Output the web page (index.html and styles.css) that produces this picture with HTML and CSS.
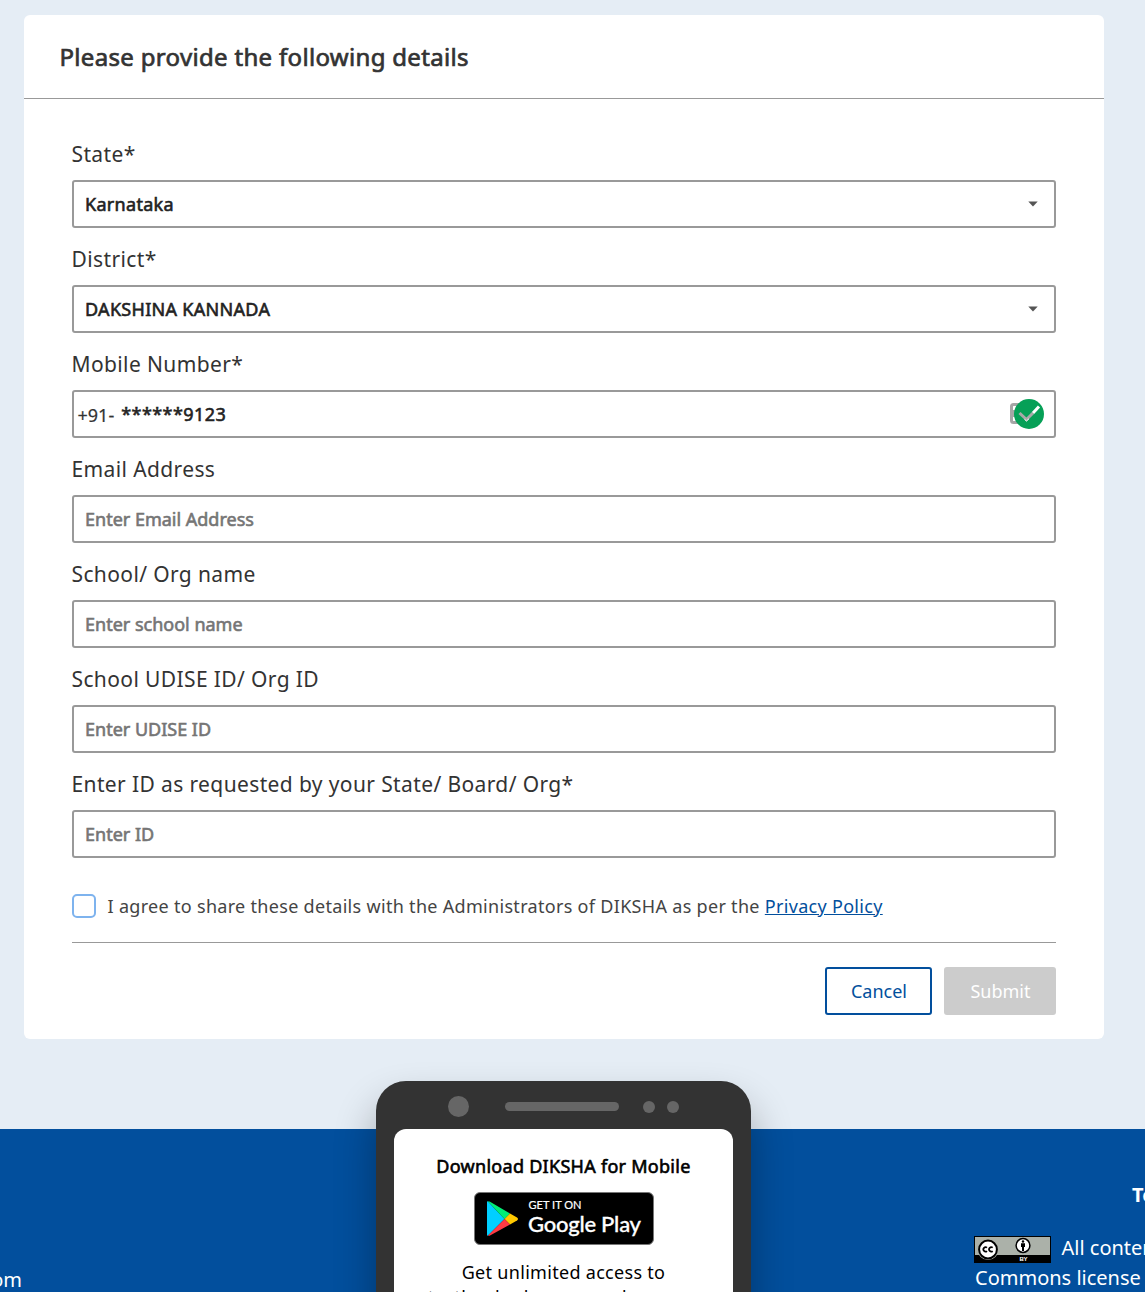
FILE: index.html
```html
<!DOCTYPE html>
<html lang="en">
<head>
<meta charset="utf-8">
<title>DIKSHA - Submit details</title>
<link rel="stylesheet" href="styles.css">
</head>
<body>
<main class="card">
  <header class="card-header"><h1 class="title"><span>Please provide the following details</span></h1></header>
  <form class="form">
    <div class="field"><label class="label">State*</label><div class="control select"><span class="value">Karnataka</span><svg class="caret" viewBox="0 0 10 6"><path d="M.3 .5h9.400L5 5.500z"/></svg></div></div>
    <div class="field"><label class="label">District*</label><div class="control select"><span class="value">DAKSHINA KANNADA</span><svg class="caret" viewBox="0 0 10 6"><path d="M.3 .5h9.400L5 5.500z"/></svg></div></div>
    <div class="field"><label class="label">Mobile Number*</label><div class="control mobile"><span class="prefix">+91-</span><span class="value number">******9123</span>
      <svg class="verified" viewBox="0 0 36 32"><rect x="2.500" y="6.500" width="20" height="18" rx="2" fill="none" stroke="#a6a6a6" stroke-width="3"/><path d="M3 12h5l-2 3 2 4H3z" fill="#a6a6a6"/><circle cx="20" cy="16" r="15" fill="#06a057"/><path d="M10.500 15 17.500 21.500 24 15" fill="none" stroke="#a9a9a9" stroke-width="3"/><path d="m24 15 6-6.500" fill="none" stroke="#fff" stroke-width="3"/><path d="m15.500 21.300 2 1.700 2.500-2.300" fill="none" stroke="#fff" stroke-width="1"/></svg></div></div>
    <div class="field"><label class="label">Email Address</label><div class="control"><span class="value placeholder">Enter Email Address</span></div></div>
    <div class="field"><label class="label">School/ Org name</label><div class="control"><span class="value placeholder">Enter school name</span></div></div>
    <div class="field"><label class="label">School UDISE ID/ Org ID</label><div class="control"><span class="value placeholder">Enter UDISE ID</span></div></div>
    <div class="field"><label class="label">Enter ID as requested by your State/ Board/ Org*</label><div class="control"><span class="value placeholder">Enter ID</span></div></div>
    <div class="consent"><span class="checkbox"></span><span class="consent-text">I agree to share these details with the Administrators of DIKSHA as per the <a class="link">Privacy Policy</a></span></div>
    <div class="actions"><button type="button" class="button cancel">Cancel</button><button type="button" class="button submit" disabled>Submit</button></div>
  </form>
</main>
<footer class="footer">
  <div class="contact"><span class="mail">support@diksha.com</span></div>
  <section class="phone">
    <div class="phone-top"><i class="camera"></i><i class="speaker"></i><i class="sensor"></i><i class="sensor"></i></div>
    <div class="screen">
      <h2 class="download">Download DIKSHA for Mobile</h2>
      <svg class="badge" viewBox="0 0 180 54">
        <rect x=".5" y=".5" width="179" height="52" rx="5.500" fill="#000" stroke="#777"/>
        <path d="M13 10v33q0 1 1 .5L30.500 27 14 9.500q-1-.5-1 .5z" fill="#00cfff"/>
        <path d="M14 9.500 30.500 27l5.500-5.500L16 9.800q-1-.7-2-.3z" fill="#00ee76"/>
        <path d="m36 21.500 7 4q2 1.500 0 3l-7 4-5.500-5.500z" fill="#ffc900"/>
        <path d="M14 43.500 30.500 27l5.500 5.500-20 11q-1 .7-2 0z" fill="#ff3a44"/>
        <text x="54.500" y="17.300" class="badge-small" textLength="53">GET IT ON</text>
        <text x="54" y="40" class="badge-large" textLength="113">Google Play</text>
      </svg>
      <p class="tagline">Get unlimited access to<br>textbooks, lessons and courses</p>
    </div>
  </section>
  <section class="legal">
    <h3 class="terms">Terms of Use</h3>
    <p class="license"><svg class="cc" viewBox="0 0 77 27"><rect width="77" height="27"/><rect x="1" y="1" width="75" height="18" fill="#abb1a9"/><circle cx="14" cy="13.500" r="10.500" fill="#abb1a9"/><circle cx="14" cy="13.500" r="8.900" fill="#fff" stroke="#000" stroke-width="2"/><path d="M13 11.700a2.200 2.200 0 1 0 0 3.400M18.700 11.700a2.200 2.200 0 1 0 0 3.400" fill="none" stroke="#000" stroke-width="1.700"/><circle cx="49" cy="9.500" r="6.900" fill="#fff" stroke="#000" stroke-width="1.500"/><circle cx="49" cy="5.500" r="1.200"/><path d="M47 7.300h4V11h-1v4h-2v-4h-1z"/><text x="45.500" y="25.300" class="cc-text" textLength="8">BY</text></svg>All content is available under Creative<br>Commons license unless otherwise noted</p>
  </section>
</footer>
</body>
</html>
```
FILE: styles.css
```css
* { box-sizing: border-box; }
html, body { margin: 0; height: 1292px; overflow: hidden; }
body { background: #e5edf5; color: #333; font-family: "Noto Sans", sans-serif; padding-top: 15px; }
.card { width: 1080px; height: 1024px; margin-left: 24px; background: #fff; border-radius: 6px; }
.card-header { height: 84px; padding: 0 35.500px; border-bottom: 1px solid #999; }
.title { margin: 0; font-size: 24px; font-weight: 400; line-height: 83px; letter-spacing: .32px; -webkit-text-stroke: .7px; }
.form { padding: 39px 48px 0; }
.field { height: 105px; }
.label { display: block; height: 42px; margin-left: -.5px; line-height: 33px; font-size: 21px; letter-spacing: .38px; }
.control { display: flex; align-items: center; height: 48px; border: 2px solid #999; border-radius: 3px; padding: 0 11px; }
.select { justify-content: space-between; padding-right: 16px; }
.value { color: #222; font-size: 18px; letter-spacing: .3px; -webkit-text-stroke: .6px; }
.number { letter-spacing: .44px; }
.placeholder { color: #757575; letter-spacing: 0; }
.caret { width: 10px; height: 6px; fill: #555; }
.mobile { padding: 0 9px 0 3.500px; }
.prefix { font-size: 18px; margin-right: 7px; padding-top: 2px; -webkit-text-stroke: .2px; }
.verified { width: 36px; height: 32px; margin-left: auto; }
.consent { display: flex; align-items: center; gap: 11.500px; height: 70px; padding-bottom: 4px; border-bottom: 1px solid #999; }
.checkbox { width: 24px; height: 24px; border: 2px solid #7eb3ee; border-radius: 5px; }
.consent-text { font-size: 18px; letter-spacing: .307px; color: #444; white-space: nowrap; }
.link { color: #024f9d; text-decoration: underline; }
.actions { display: flex; justify-content: flex-end; gap: 12px; padding-top: 24px; }
.button { height: 48px; border-radius: 3px; font: 18px "Noto Sans", sans-serif; padding: 0 0 0 1px; letter-spacing: 0; }
.cancel { width: 107px; border: 2px solid #024f9d; background: #fff; color: #024f9d; }
.submit { width: 112px; border: 0; background: #ccc; color: #fff; }
.footer { display: grid; grid-template-columns: 376px 375px 394px; height: 163px; margin-top: 90px; background: #024f9d; color: #fff; }
.contact { display: flex; justify-content: flex-end; width: 22px; padding-top: 137px; font-size: 20px; line-height: 28px; }
.mail { white-space: nowrap; }
.phone { height: 260px; margin-top: -48px; padding: 0 18px; border-radius: 30px 30px 0 0; background: #333; color: #000; box-shadow: 0 24px 42px rgba(0,0,0,.32); }
.phone-top { display: flex; align-items: center; height: 48px; padding: 3px 0 0 54px; }
.camera, .speaker, .sensor { background: #666; border-radius: 12px; }
.camera { width: 21px; height: 21px; }
.speaker { width: 114px; height: 9px; margin: 0 24px 0 36px; }
.sensor { width: 12px; height: 12px; margin-right: 12px; }
.screen { height: 212px; background: #fff; border-radius: 12px 12px 0 0; text-align: center; }
.download { margin: 0; padding-top: 24px; font-size: 18px; line-height: 27px; font-weight: 400; letter-spacing: .28px; -webkit-text-stroke: .6px; }
.badge { display: block; width: 180px; height: 54px; margin: 12px auto 14px; }
.badge-small { font: 11px Lato, sans-serif; fill: #fff; stroke: #fff; stroke-width: .2px; }
.badge-large { font: 500 22px Lato, sans-serif; fill: #fff; stroke: #fff; stroke-width: .3px; }
.tagline { margin: 0; font-size: 18px; line-height: 25px; letter-spacing: .3px; white-space: nowrap; }
.legal { overflow: hidden; padding: 51px 0 0 224px; }
.terms { margin: 0 0 23px 157px; font-size: 20px; line-height: 30px; font-weight: 700; white-space: nowrap; }
.license { margin: 0; font-size: 20px; line-height: 30px; white-space: nowrap; }
.cc { width: 77px; height: 27px; margin: 0 10.500px 0 -1px; vertical-align: -8px; }
.cc-text { font: bold 6px "Liberation Sans", sans-serif; fill: #fff; }
```
